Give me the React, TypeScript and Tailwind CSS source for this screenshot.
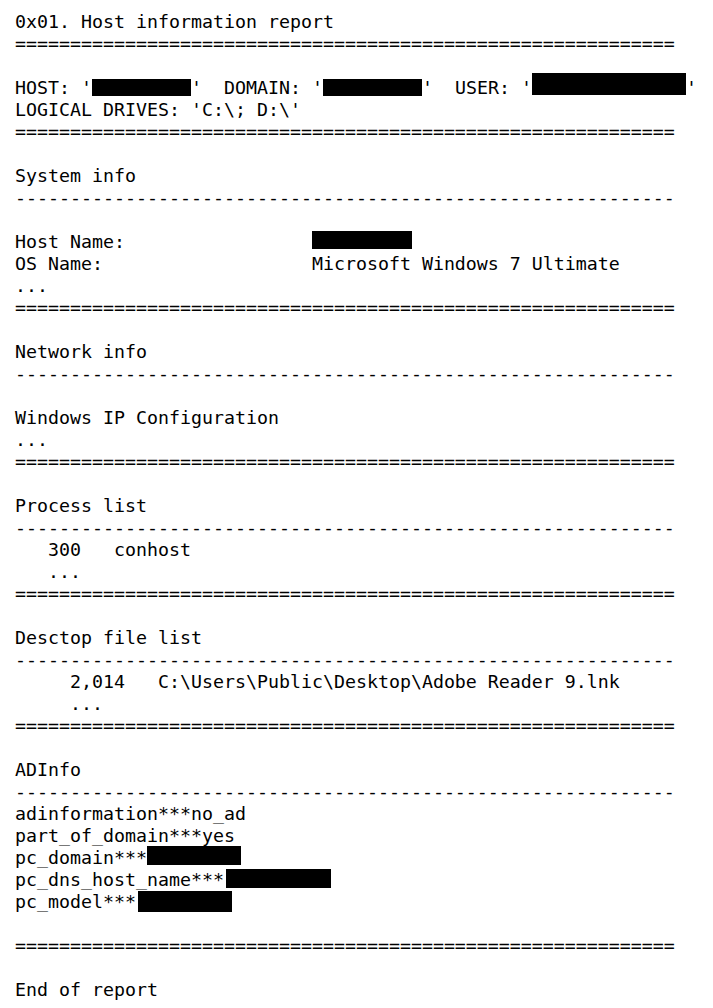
import React from 'react';

const EQ = '='.repeat(60);
const DASH = '-'.repeat(60);

// black redaction block, sits in the text flow
function Redact({ className }: { className: string }) {
  return <span className={`inline-block align-top bg-black ${className}`} />;
}

function Line({ children }: { children?: React.ReactNode }) {
  return <div className="h-[22px] leading-[22px] whitespace-pre">{children ?? ' '}</div>;
}

export default function App() {
  return (
    <div
      className="min-h-screen bg-white text-black pt-[11px] pl-[15px] text-[18.27px]"
      style={{ fontFamily: '"DejaVu Sans Mono", "Liberation Mono", monospace' }}
    >
      <Line>0x01. Host information report</Line>
      <Line>{EQ}</Line>
      <Line />
      <Line>
        HOST: '<Redact className="w-[99px] h-[17px] mt-[2px]" />'  DOMAIN: '
        <Redact className="w-[99px] h-[17px] mt-[2px]" />'  USER: '
        <Redact className="w-[154px] h-[22px] mt-[-4px]" />'
      </Line>
      <Line>LOGICAL DRIVES: 'C:\; D:\'</Line>
      <Line>{EQ}</Line>
      <Line />
      <Line>System info</Line>
      <Line>{DASH}</Line>
      <Line />
      <Line>
        {'Host Name:                 '}
        <Redact className="w-[100px] h-[18px]" />
      </Line>
      <Line>{'OS Name:                   Microsoft Windows 7 Ultimate'}</Line>
      <Line>...</Line>
      <Line>{EQ}</Line>
      <Line />
      <Line>Network info</Line>
      <Line>{DASH}</Line>
      <Line />
      <Line>Windows IP Configuration</Line>
      <Line>...</Line>
      <Line>{EQ}</Line>
      <Line />
      <Line>Process list</Line>
      <Line>{DASH}</Line>
      <Line>{'   300   conhost'}</Line>
      <Line>{'   ...'}</Line>
      <Line>{EQ}</Line>
      <Line />
      <Line>Desctop file list</Line>
      <Line>{DASH}</Line>
      <Line>{'     2,014   C:\\Users\\Public\\Desktop\\Adobe Reader 9.lnk'}</Line>
      <Line>{'     ...'}</Line>
      <Line>{EQ}</Line>
      <Line />
      <Line>ADInfo</Line>
      <Line>{DASH}</Line>
      <Line>adinformation***no_ad</Line>
      <Line>part_of_domain***yes</Line>
      <Line>
        pc_domain***<Redact className="w-[94px] h-[19px] mt-[-1px]" />
      </Line>
      <Line>
        pc_dns_host_name***<Redact className="w-[105px] h-[19px] ml-[2px]" />
      </Line>
      <Line>
        pc_model***<Redact className="w-[94px] h-[21px] ml-[2px]" />
      </Line>
      <Line />
      <Line>{EQ}</Line>
      <Line />
      <Line>End of report</Line>
    </div>
  );
}
